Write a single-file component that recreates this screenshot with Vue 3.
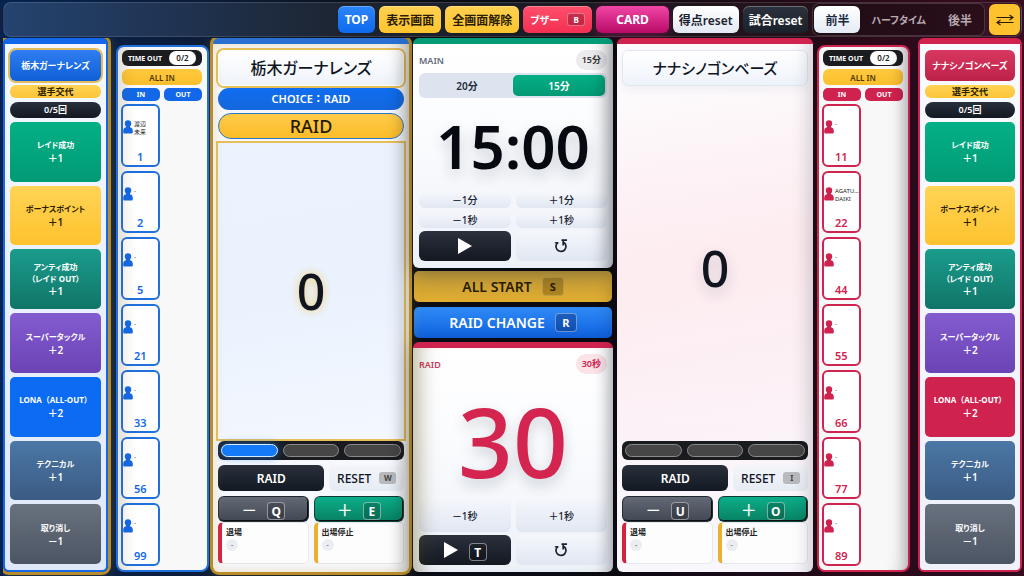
<script setup>
import { ref } from 'vue'

const half = ref('前半')
const mainLength = ref('15分')

const actions = [
  { label: 'レイド成功', value: '＋1', tone: 'green' },
  { label: 'ボーナスポイント', value: '＋1', tone: 'gold' },
  { label: 'アンティ成功', note: '（レイド OUT）', value: '＋1', tone: 'teal' },
  { label: 'スーパータックル', value: '＋2', tone: 'purple' },
  { label: 'LONA（ALL-OUT）', value: '＋2', tone: 'lona' },
  { label: 'テクニカル', value: '＋1', tone: 'steel' },
  { label: '取り消し', value: '－1', tone: 'grey' }
]

const home = {
  name: '栃木ガーナレンズ',
  side: 'home',
  active: true,
  players: [
    { no: 1, names: ['渡辺', '未来'] },
    { no: 2, names: ['-'] },
    { no: 5, names: ['-'] },
    { no: 21, names: ['-'] },
    { no: 33, names: ['-'] },
    { no: 56, names: ['-'] },
    { no: 99, names: ['-'] }
  ],
  keys: { reset: 'W', minus: 'Q', plus: 'E' },
  lamps: [true, false, false]
}

const away = {
  name: 'ナナシノゴンベーズ',
  side: 'away',
  active: false,
  players: [
    { no: 11, names: ['-'] },
    { no: 22, names: ['AGATU…', 'DAIKI'] },
    { no: 44, names: ['-'] },
    { no: 55, names: ['-'] },
    { no: 66, names: ['-'] },
    { no: 77, names: ['-'] },
    { no: 89, names: ['-'] }
  ],
  keys: { reset: 'I', minus: 'U', plus: 'O' },
  lamps: [false, false, false]
}

const columns = [
  { kind: 'actions', team: home },
  { kind: 'roster', team: home },
  { kind: 'team', team: home },
  { kind: 'center' },
  { kind: 'team', team: away },
  { kind: 'roster', team: away },
  { kind: 'actions', team: away }
]
</script>

<template>
  <div class="page" lang="ja">
    <header class="topbar">
      <button class="tb blue">TOP</button>
      <button class="tb gold">表示画面</button>
      <button class="tb gold">全画面解除</button>
      <button class="tb red">ブザー <kbd>B</kbd></button>
      <button class="tb pink">CARD</button>
      <button class="tb light">得点reset</button>
      <button class="tb dark">試合reset</button>
      <div class="halves">
        <button
          v-for="h in ['前半', 'ハーフタイム', '後半']"
          :key="h"
          :class="{ on: half === h, kana: h === 'ハーフタイム' }"
          @click="half = h"
        >{{ h }}</button>
      </div>
      <button class="swap" aria-label="コートチェンジ">
        <svg viewBox="0 0 18 12" width="18" height="12" fill="none" stroke="currentColor" stroke-width="1.2">
          <path d="M0.5 3.5H17M13.5 1L17 3.5L13.5 6M17.5 8.500H1M4.500 6L1 8.500L4.500 11" />
        </svg>
      </button>
    </header>

    <main class="board">
      <template v-for="(col, i) in columns" :key="i">
        <section
          v-if="col.kind === 'actions'"
          class="panel actions"
          :class="[col.team.side, { active: col.team.active }]"
        >
          <button class="team-btn">{{ col.team.name }}</button>
          <button class="swap-player">選手交代</button>
          <div class="count">0/5回</div>
          <button v-for="a in actions" :key="a.label" class="act" :class="a.tone">
            <span class="act-label">{{ a.label }}</span>
            <span v-if="a.note" class="act-note">{{ a.note }}</span>
            <span class="act-value">{{ a.value }}</span>
          </button>
        </section>

        <section v-else-if="col.kind === 'roster'" class="roster" :class="col.team.side">
          <button class="timeout">TIME OUT <b>0/2</b></button>
          <button class="all-in">ALL IN</button>
          <div class="inout"><span>IN</span><span>OUT</span></div>
          <div class="slots">
            <div class="lane">
              <button v-for="p in col.team.players" :key="p.no" class="player">
                <span class="who">
                  <svg viewBox="0 0 10 14" width="10" height="14" fill="currentColor">
                    <circle cx="5" cy="3.400" r="3.200" />
                    <path d="M3 5.500H7V7.200C9 7.600 9.800 9 9.800 11V12.200Q9.800 13.500 8.500 13.500H1.500Q0.200 13.500 0.200 12.200V11C0.200 9 1 7.600 3 7.200Z" />
                  </svg>
                  <span class="names"><span v-for="n in p.names" :key="n">{{ n }}</span></span>
                </span>
                <span class="no">{{ p.no }}</span>
              </button>
            </div>
            <div class="lane"></div>
          </div>
        </section>

        <section
          v-else-if="col.kind === 'team'"
          class="panel team"
          :class="[col.team.side, { active: col.team.active }]"
        >
          <h2 class="team-name">{{ col.team.name }}</h2>
          <div v-if="col.team.active" class="choice">CHOICE：RAID</div>
          <div v-if="col.team.active" class="raid-now">RAID</div>
          <div class="score">0</div>
          <div class="lamps">
            <span v-for="(on, n) in col.team.lamps" :key="n" :class="{ on }"></span>
          </div>
          <div class="row raid-row">
            <button class="raid-btn">RAID</button>
            <button class="reset-btn">RESET <kbd>{{ col.team.keys.reset }}</kbd></button>
          </div>
          <div class="foot">
            <div class="row half-row">
              <button class="pm minus"><span>－</span><kbd>{{ col.team.keys.minus }}</kbd></button>
              <button class="pm plus"><span>＋</span><kbd>{{ col.team.keys.plus }}</kbd></button>
            </div>
            <div class="row half-row">
              <div class="status out"><strong>退場</strong><i>-</i></div>
              <div class="status stop"><strong>出場停止</strong><i>-</i></div>
            </div>
          </div>
        </section>

        <section v-else class="center">
          <div class="panel timer main-timer">
            <div class="t-head"><span>MAIN</span><em>15分</em></div>
            <div class="tabs">
              <button
                v-for="t in ['20分', '15分']"
                :key="t"
                :class="{ on: mainLength === t }"
                @click="mainLength = t"
              >{{ t }}</button>
            </div>
            <div class="clock">15:00</div>
            <div class="row half-row slim"><button>－1分</button><button>＋1分</button></div>
            <div class="row half-row slim"><button>－1秒</button><button>＋1秒</button></div>
            <div class="row half-row ctl">
              <button class="play" aria-label="開始">
                <svg viewBox="0 0 16 18" width="16" height="18"><path d="M1 1L15 9L1 17Z" fill="#fff" /></svg>
              </button>
              <button aria-label="リセット">
                <svg viewBox="0 0 16 16" width="16" height="16" fill="none" stroke="currentColor" stroke-width="1.700">
                  <path d="M4.800 4.600A5 5 0 1 0 11 4.500" />
                  <path d="M8.500 2.200H14M10.200 2.500V7.500" />
                  <path d="M1.800 4.800H5.500" stroke-width="1.300" />
                </svg>
              </button>
            </div>
          </div>
          <button class="wide start">ALL START <kbd>S</kbd></button>
          <button class="wide change">RAID CHANGE <kbd>R</kbd></button>
          <div class="panel timer raid-timer">
            <div class="t-head"><span>RAID</span><em>30秒</em></div>
            <div class="clock">30</div>
            <div class="row half-row tall"><button>－1秒</button><button>＋1秒</button></div>
            <div class="row half-row ctl">
              <button class="play" aria-label="レイド開始">
                <svg viewBox="0 0 16 18" width="16" height="18"><path d="M1 1L15 9L1 17Z" fill="#fff" /></svg>
                <kbd>T</kbd>
              </button>
              <button aria-label="レイドリセット">
                <svg viewBox="0 0 16 16" width="16" height="16" fill="none" stroke="currentColor" stroke-width="1.700">
                  <path d="M4.800 4.600A5 5 0 1 0 11 4.500" />
                  <path d="M8.500 2.200H14M10.200 2.500V7.500" />
                  <path d="M1.800 4.800H5.500" stroke-width="1.300" />
                </svg>
              </button>
            </div>
          </div>
        </section>
      </template>
    </main>
  </div>
</template>

<style>
body {
  margin: 0;
  background: #0b0f17;
}
</style>

<style scoped>
* {
  box-sizing: border-box;
}
.page {
  min-height: 100vh;
  display: flex;
  flex-direction: column;
  gap: 1px;
  padding: 2px 2px 4px 3px;
  font-family: "Noto Sans", "Noto Sans CJK JP", sans-serif;
  font-feature-settings: "palt";
  font-weight: 600;
  color: #10151f;
  background: linear-gradient(90deg, #06234f 0%, #0c1c38 20%, #0a0d14 42%, #0c0a10 58%, #260a18 80%, #3a0c20 100%);
}
button {
  font: inherit;
  font-feature-settings: inherit;
  color: inherit;
  border: 0;
  margin: 0;
  padding: 0;
  cursor: pointer;
  white-space: nowrap;
}
kbd {
  font-family: inherit;
  font-weight: 700;
  text-align: center;
}

/* top bar */
.topbar {
  display: flex;
  justify-content: flex-end;
  align-items: center;
  gap: 4px;
  height: 35px;
  padding: 0 1px 0 4px;
  border: 1px solid rgba(255, 255, 255, 0.13);
  border-radius: 8px;
  background: linear-gradient(90deg, #24436f 0%, #1f324f 18%, #1d2430 34%, #1a1a22 55%, #261019 80%, #3a1526 100%);
}
.tb {
  display: flex;
  align-items: center;
  justify-content: center;
  height: 27px;
  padding: 0 7px;
  border-radius: 6px;
  font-size: 12px;
  font-weight: 700;
  box-shadow: inset 0 1px 0 rgba(255, 255, 255, 0.3);
}
.tb.blue { color: #fff; background: linear-gradient(#2b85fa, #0e69ee); }
.tb.gold { color: #2a1d00; background: linear-gradient(#ffd050, #fec52e); }
.tb.red { gap: 8px; font-size: 10px; color: #fff; background: linear-gradient(#ff4f6c, #f32f52); }
.tb.red kbd {
  width: 18px;
  height: 13px;
  line-height: 12px;
  font-size: 8px;
  border: 1px solid rgba(255, 255, 255, 0.35);
  border-radius: 3px;
  background: rgba(120, 10, 40, 0.4);
}
.tb.pink { padding: 0 20px; color: #fff; background: linear-gradient(#f246a6, #b80a66); box-shadow: 0 3px 12px rgba(220, 20, 120, 0.35); }
.tb.light { padding: 0 6px; font-weight: 600; background: linear-gradient(#fff, #e3e9f3); color: #1b2230; }
.tb.dark { padding: 0 6px; font-weight: 600; background: linear-gradient(#2c323d, #1b212b); color: #fff; }
.halves {
  display: flex;
  align-items: center;
  height: 33px;
  padding: 0 1px;
  border: 1px solid rgba(255, 255, 255, 0.16);
  border-radius: 7px;
  background: rgba(20, 5, 12, 0.35);
}
.halves button {
  height: 27px;
  padding: 0 11px;
  border-radius: 6px;
  font-size: 12px;
  color: #b9aab2;
  background: transparent;
}
.halves .kana { font-size: 10px; }
.halves .on { color: #1b2a40; background: linear-gradient(#fff, #e5ebf5); }
.swap {
  display: grid;
  place-items: center;
  width: 31px;
  height: 31px;
  border-radius: 6px;
  color: #2a1d00;
  background: #fdc22d;
}

/* board */
.board {
  flex: 1;
  display: grid;
  grid-template-columns: 105fr 97fr 196fr 200fr 196fr 97fr 104fr;
  gap: 4px;
  clip-path: inset(0 0 -4px 0);
}
.board > * { min-width: 0; }
.home { --c: #1268e8; --c1: #2f7df0; --c2: #0f5fd8; --cb: #1f6fdc; }
.away { --c: #d0224e; --c1: #d8385f; --c2: #bd2149; --cb: #cf2450; }
.panel {
  position: relative;
  display: flex;
  flex-direction: column;
  border-radius: 6px;
  background: #f6f8fd;
  box-shadow: 0 4px 20px rgba(10, 15, 30, 0.35);
}
.panel.active {
  box-shadow: 0 0 0 3px #b88c28, 0 0 16px rgba(240, 180, 40, 0.3);
}
.row { display: grid; gap: 5px; }
.half-row { grid-template-columns: 1fr 1fr; }

/* actions */
.actions {
  gap: 4px;
  padding: 6px 5px;
  border: 2px solid var(--c);
  border-top-width: 6px;
  background: linear-gradient(#f8fafd, #eef1fa);
}
.actions.home { background: linear-gradient(#f4f8fe, #dfe8f8); }
.team-btn {
  height: 31px;
  border-radius: 6px;
  font-size: 9px;
  font-weight: 700;
  color: #fff;
  background: linear-gradient(var(--c1), var(--c2));
}
.active .team-btn { box-shadow: 0 0 0 2px #e3bd58; }
.swap-player {
  height: 13px;
  line-height: 13px;
  border-radius: 6px;
  font-size: 9px;
  font-weight: 700;
  color: #2a1d00;
  background: linear-gradient(#ffd355, #fdc538);
}
.count {
  height: 16px;
  line-height: 16px;
  border-radius: 8px;
  text-align: center;
  font-size: 9px;
  font-weight: 600;
  color: #fff;
  background: linear-gradient(#28303c, #131922);
}
.act {
  flex: 1;
  min-height: 56px;
  display: flex;
  flex-direction: column;
  align-items: center;
  justify-content: center;
  border-radius: 5px;
  color: #fff;
  font-size: 8px;
  font-weight: 700;
  line-height: 14px;
}
.act-label { line-height: 13px; }
.act-note { line-height: 11px; }
.act-value { font-size: 10px; font-weight: 600; }
.act.green { background: linear-gradient(#04b086, #019a75); }
.act.gold { background: linear-gradient(#ffd456, #fec22d); color: #2a1d00; }
.act.teal { background: linear-gradient(#1a9c8c, #117568); }
.act.purple { background: linear-gradient(#835cd0, #6b43b4); }
.act.lona { background: var(--c); }
.lona .act-label { font-feature-settings: normal; }
.home .act.lona { background: #0b6bf2; }
.act.steel { background: linear-gradient(#4c77a6, #3a5b83); }
.act.grey { background: linear-gradient(#69717f, #4c5563); }

/* roster */
.roster {
  position: relative;
  display: flex;
  flex-direction: column;
  margin-top: 7px;
  padding: 3px 5px 4px 3px;
  border: 2px solid var(--cb);
  border-radius: 8px;
  background: #f8f8f9;
}
.roster.home { margin-left: 4px; z-index: 1; }
.roster.away { margin-right: 4px; }
.roster::after {
  content: "";
  position: absolute;
  inset: 0;
  border-radius: 6px;
  pointer-events: none;
}
.roster.home::after { box-shadow: inset 18px 0 16px -14px rgba(110, 90, 40, 0.22); }
.roster.away::after { box-shadow: inset -18px 0 16px -14px rgba(30, 20, 30, 0.3); }
.timeout {
  display: flex;
  align-items: center;
  justify-content: space-between;
  height: 16px;
  margin-left: 1px;
  padding: 0 6px;
  border-radius: 6px;
  font-size: 7px;
  font-weight: 700;
  color: #fff;
  background: #1b1c20;
}
.timeout b {
  width: 27px;
  height: 14px;
  line-height: 14px;
  border-radius: 7px;
  font-weight: 600;
  font-size: 8px;
  color: #222;
  background: #fff;
}
.all-in {
  height: 16px;
  margin: 3px 0 3px 1px;
  border-radius: 6px;
  font-size: 8px;
  color: #4a3500;
  background: linear-gradient(#ffc93e, #fbbf2c);
}
.inout {
  display: grid;
  grid-template-columns: 1fr 1fr;
  gap: 4px;
  margin-left: 1px;
}
.inout span {
  height: 13px;
  line-height: 14px;
  border-radius: 5px;
  text-align: center;
  font-size: 7px;
  font-weight: 700;
  color: #fff;
  background: var(--c);
}
.slots {
  flex: 1;
  display: grid;
  grid-template-columns: 1fr 1fr;
  gap: 4px;
  margin-top: 3px;
}
.lane { display: flex; flex-direction: column; gap: 4px; min-width: 0; }
.player {
  flex: 1;
  min-height: 56px;
  display: flex;
  flex-direction: column;
  align-items: stretch;
  justify-content: space-between;
  padding: 14px 0 0;
  border: 2px solid var(--cb);
  border-radius: 6px;
  color: var(--c);
  background: #fff;
}
.who { display: flex; gap: 1px; }
.who svg { flex: none; }
.names {
  display: flex;
  flex-direction: column;
  text-align: left;
  font-size: 6px;
  line-height: 8px;
  font-weight: 400;
  color: #222;
}
.no { font-size: 11px; line-height: 16px; }

/* team */
.team {
  padding: 6px 5px 8px;
  border-top: 6px solid var(--cb);
}
.team.away { background: linear-gradient(#fdfbfd, #fdf3f7 60%, #f8f7fc); }
.team.active { border-top-color: #2a70d0; }
.team-name {
  height: 36px;
  line-height: 35px;
  margin: 0;
  border: 1px solid #e2e7ef;
  border-radius: 6px;
  text-align: center;
  font-size: 16px;
  font-weight: 500;
  background: linear-gradient(#fff, #eef3fa);
  box-shadow: 0 4px 10px rgba(30, 50, 90, 0.06);
}
.away .team-name { font-size: 15px; }
.active .team-name { border-color: #fff; box-shadow: 0 0 0 2px #e6bf58; }
.choice {
  height: 22px;
  line-height: 22px;
  margin-top: 2px;
  border-radius: 11px;
  text-align: center;
  font-size: 11px;
  font-weight: 600;
  font-feature-settings: normal;
  color: #fff;
  background: linear-gradient(#0f6df0, #1467dd);
}
.raid-now {
  height: 26px;
  line-height: 25px;
  margin-top: 3px;
  border: 1px solid #2b76c4;
  border-radius: 13px;
  text-align: center;
  font-size: 18px;
  font-weight: 500;
  color: #241a02;
  background: linear-gradient(#ffcb4a, #fbbc28);
}
.score {
  flex: 1;
  display: grid;
  place-items: center;
  min-height: 120px;
  padding-top: 8px;
  font-size: 50px;
  font-weight: 500;
  line-height: 60px;
  text-shadow: 0 6px 14px rgba(30, 40, 60, 0.2);
}
.active .score {
  margin: 2px -2px 0;
  padding-top: 0;
  border: 2px solid #e6bf58;
  background: linear-gradient(170deg, #ecf3fd, #eaf2fe 50%, #f4f8fe);
  text-shadow: 0 0 10px #f2cf70;
}
.away .score {
  margin: 0 -5px;
  background: linear-gradient(170deg, rgba(255, 248, 250, 0) 5%, #fdecf0 50%, rgba(251, 243, 249, 0.6));
}
.team::after {
  content: "";
  position: absolute;
  inset: 0;
  border-radius: 0 0 6px 6px;
  pointer-events: none;
  box-shadow: inset -20px 0 18px -16px rgba(20, 25, 40, 0.2);
}
.team.active::after {
  box-shadow: inset 0 0 12px rgba(210, 165, 50, 0.3), inset -22px 0 18px -16px rgba(20, 25, 40, 0.22);
}
.lamps {
  display: grid;
  grid-template-columns: 1fr 1fr 1fr;
  gap: 5px;
  height: 19px;
  margin-bottom: 5px;
  padding: 3px;
  border-radius: 6px;
  background: #1a1b1f;
}
.lamps span {
  border: 1px solid #8b8b8b;
  border-radius: 7px;
  background: #464646;
}
.lamps .on {
  border-color: #d8ebff;
  background: #147af8;
  box-shadow: 0 0 8px rgba(30, 130, 255, 0.7);
}
.raid-row {
  grid-template-columns: 107fr 75fr;
  margin-bottom: 5px;
}
.raid-row button {
  height: 26px;
  border-radius: 6px;
  font-size: 12px;
}
.raid-btn { color: #fff; background: linear-gradient(#29303b, #131922); }
.raid-row .reset-btn { font-weight: 500; }
.reset-btn {
  display: flex;
  align-items: center;
  justify-content: center;
  gap: 8px;
  background: linear-gradient(#f3f5fa, #e6ebf3);
}
.reset-btn kbd {
  width: 17px;
  height: 12px;
  line-height: 12px;
  border-radius: 3px;
  font-size: 8px;
  color: #444;
  background: #b8babd;
}
.pm {
  display: flex;
  align-items: center;
  justify-content: center;
  gap: 10px;
  height: 26px;
  border-radius: 6px;
  color: #fff;
  font-size: 16px;
  font-weight: 500;
  border: 1px solid rgba(20, 25, 30, 0.7);
  box-shadow: inset -1px -1px 0 #0c1012;
}
.pm span { width: 16px; }
.pm kbd, .play kbd {
  width: 18px;
  height: 18px;
  margin-top: 4px;
  line-height: 18px;
  font-size: 12px;
  border: 1px solid rgba(255, 255, 255, 0.45);
  border-radius: 4px;
  background: rgba(0, 0, 0, 0.2);
}
.minus { background: linear-gradient(#636975, #414753); }
.plus { background: linear-gradient(#0cae89, #088263); }
.status {
  display: flex;
  flex-direction: column;
  align-items: flex-start;
  gap: 2px;
  min-height: 42px;
  padding: 3px 4px;
  border: 1px solid #e5e8ee;
  border-left: 4px solid #d2243f;
  border-radius: 5px;
  background: #fdfdfe;
}
.status.stop { border-left-color: #eab02f; }
.status strong { font-size: 8px; line-height: 11px; font-weight: 600; color: #222; }
.status i {
  width: 12px;
  height: 12px;
  line-height: 11px;
  border-radius: 6px;
  text-align: center;
  font-style: normal;
  font-size: 7px;
  color: #777;
  background: #eaedf2;
}

/* centre */
.center {
  display: flex;
  flex-direction: column;
}
.timer {
  flex: 1;
  padding: 6px 6px 7px;
  border-top: 6px solid #079c78;
  background: linear-gradient(#fff, #fbfcfe 40%, #edf1f8);
}
.raid-timer { border-top-color: #cf2450; }
.timer::after {
  content: "";
  position: absolute;
  inset: 0;
  border-radius: 0 0 6px 6px;
  pointer-events: none;
  box-shadow: inset -22px 0 18px -16px rgba(20, 25, 35, 0.35);
}
.raid-timer::after {
  box-shadow: inset -18px 0 16px -14px rgba(20, 25, 35, 0.25), inset 22px 0 20px -16px rgba(90, 75, 20, 0.4);
}
.t-head {
  display: flex;
  justify-content: space-between;
  align-items: center;
  font-size: 9px;
  color: #5e6877;
}
.t-head em {
  height: 20px;
  line-height: 20px;
  padding: 0 6px;
  border-radius: 10px;
  font-style: normal;
  color: #333;
  background: #ebebee;
}
.raid-timer .t-head { color: #cb3a5e; }
.raid-timer .t-head em { color: #cf2450; background: #fbe3e8; }
.tabs {
  display: grid;
  grid-template-columns: 1fr 1fr;
  height: 25px;
  margin-top: 3px;
  padding: 2px;
  border-radius: 6px;
  background: #dde3ef;
}
.tabs button {
  border-radius: 5px;
  font-size: 10px;
  color: #222b38;
  background: transparent;
}
.tabs .on { color: #fff; background: linear-gradient(#05ae85, #029a75); }
.clock {
  flex: 1;
  display: grid;
  place-items: center;
  font-size: 60px;
  line-height: 84px;
  color: #06090f;
  text-shadow: 0 6px 14px rgba(30, 40, 60, 0.2);
}
.raid-timer .clock {
  padding-top: 8px;
  font-size: 96px;
  font-weight: 500;
  line-height: 110px;
  color: #d3254f;
}
.timer .row button {
  border-radius: 6px;
  font-size: 10px;
  font-weight: 500;
  color: #1b2230;
  background: linear-gradient(#f4f6fb, #e1e7f2);
}
.timer .slim button { height: 15px; line-height: 15px; }
.slim { margin-bottom: 5px; }
.slim + .ctl { margin-top: -2px; }
.timer .tall button { height: 33px; }
.tall { margin-bottom: 3px; }
.timer .ctl button {
  display: flex;
  align-items: center;
  justify-content: center;
  gap: 10px;
  height: 30px;
}
.timer .ctl .play { color: #fff; background: linear-gradient(#2b313d, #131821); }
.wide {
  display: flex;
  align-items: center;
  justify-content: center;
  gap: 10px;
  height: 31px;
  margin: 0 1px;
  border-radius: 5px;
  font-size: 14px;
}
.wide kbd {
  width: 22px;
  height: 19px;
  line-height: 18px;
  font-size: 11px;
  border: 1px solid transparent;
  border-radius: 4px;
}
.start { margin-top: 3px; color: #2a1d00; background: linear-gradient(#c29c3c, #e0ad2f); }
.start kbd { background: rgba(70, 50, 0, 0.3); border-color: rgba(255, 230, 150, 0.25); }
.change { margin-top: 5px; margin-bottom: 4px; color: #fff; background: linear-gradient(#2f8af5, #0f63e2); }
.change kbd { background: rgba(10, 40, 110, 0.4); border-color: rgba(255, 255, 255, 0.4); }
</style>
